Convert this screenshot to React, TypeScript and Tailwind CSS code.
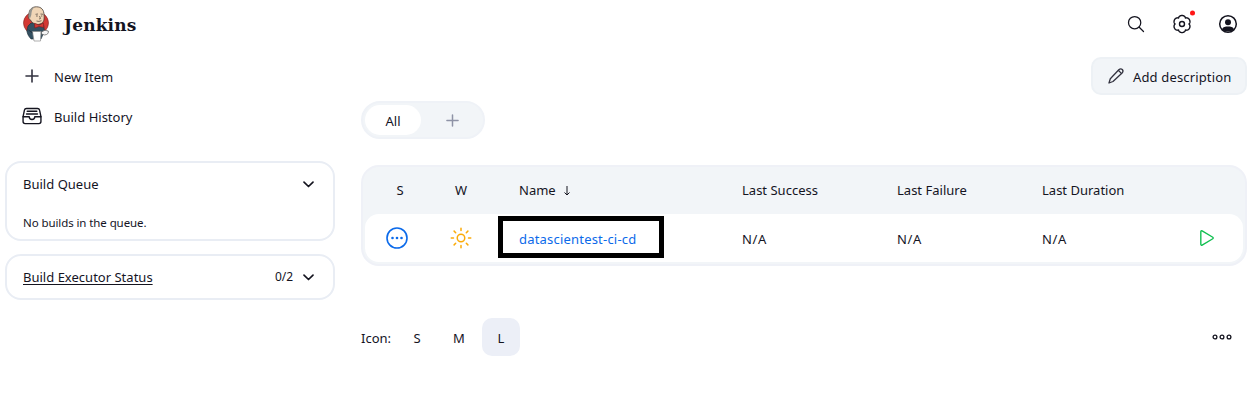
import React from "react";
import {
  IoSearchOutline,
  IoFileTrayFullOutline,
  IoPlayOutline,
  IoSunnyOutline,
} from "react-icons/io5";

function ButlerLogo() {
  return (
    <svg width="26" height="36" viewBox="0 0 26 36" fill="none">
      <ellipse cx="13" cy="17" rx="12.500" ry="11.500" fill="#d33833" stroke="#7a2a26" strokeWidth=".6" />
      <path d="M8 17 L5 20 L3.800 25 C4.500 28 5 29 6 30.500 L8 33 L18 33 L21.500 25 L20.500 19 L16 17Z" fill="#335061" stroke="#1d2b35" strokeWidth=".6" />
      <path d="M6 8 C6 3 9.500 .8 13.500 .8 C18.500 .8 21 4 21 9 C21.500 13 21 17 17 18 C13 19.500 9 17 7.500 14 C5 12.500 5 10 6 8Z" fill="#f0d6b7" stroke="#49403a" strokeWidth=".8" />
      <path d="M6 8 C6 4 8.500 1.500 11.500 1.300 C9 3 8.500 6 8.300 9 L7 12.500 C5.500 11 5.300 9 6 8Z" fill="#94948e" />
      <path d="M12.500 8.300 L15 8 M17.500 8 L20 8.300 M13 10 H14.800 M18 10 H19.300 M16.500 10 L17.500 12.500 L16 13 M13.500 15 Q16 16 18.500 14.700" stroke="#49403a" strokeWidth=".7" />
      <path d="M11.500 17.300 L16 19 L20.500 17 L20.800 21.500 L16 20.500 L11.800 22Z" fill="#d33833" stroke="#761c1c" strokeWidth=".6" />
      <path d="M9.500 25.500 L18 25.500 L17.500 35 L11 35Z" fill="#fff" stroke="#8e8e8e" strokeWidth=".7" />
      <path d="M18.300 26 Q22 23 25.300 25 Q26 28.500 21.500 29 L18.500 28Z" fill="#f5f5f5" stroke="#555" strokeWidth=".7" />
      <path d="M5.500 24 Q7 25 9.500 27" stroke="#1d2b35" strokeWidth=".8" />
    </svg>
  );
}

const gearOutline = Array.from({ length: 96 }, (_, i) => {
  const angle = (i * Math.PI) / 48;
  const radius = 6.9 + 1.7 * Math.pow(Math.abs(Math.sin(3 * angle)), 0.7);
  return `${(10 + radius * Math.cos(angle)).toFixed(2)},${(10 + radius * Math.sin(angle)).toFixed(2)}`;
}).join(" ");

function GearIcon() {
  return (
    <svg width="20" height="20" viewBox="0 0 20 20" fill="none" stroke="#14141f" strokeWidth="1.400" strokeLinejoin="round">
      <polygon points={gearOutline} />
      <circle cx="10" cy="10" r="2.500" />
    </svg>
  );
}

function UserIcon() {
  return (
    <svg width="20" height="20" viewBox="0 0 20 20" fill="none">
      <circle cx="10" cy="10" r="8.300" stroke="#14141f" strokeWidth="1.500" />
      <circle cx="10" cy="8.300" r="3" fill="#14141f" />
      <path d="M4 15.300 C5 12.700 7.500 12.500 10 12.500 C12.500 12.500 15 12.700 16 15.300 C14 18.300 6 18.300 4 15.300Z" fill="#14141f" />
    </svg>
  );
}

function PencilIcon() {
  return (
    <svg width="18" height="18" viewBox="0 0 18 18" fill="none" stroke="#333340" strokeWidth="1.300" strokeLinejoin="round">
      <path d="M11.800 2.800 Q13.700 1 15.300 2.500 Q16.800 4.100 15.100 6 L6 14.500 L2 16 L3.300 11.700Z" />
      <path d="M11.300 3.300 L14.600 6.600" />
    </svg>
  );
}

function ChevronIcon() {
  return (
    <svg width="13" height="13" viewBox="0 0 13 13" fill="none" stroke="#14141f" strokeWidth="1.700" strokeLinecap="round" strokeLinejoin="round">
      <path d="M2 4.200L6.500 8.500L11 4.200" />
    </svg>
  );
}

function PlusIcon({ size, color }: { size: number; color: string }) {
  return (
    <svg width={size} height={size} viewBox="0 0 14 14" fill="none" stroke={color} strokeWidth="1.600" strokeLinecap="round">
      <path d="M7 1V13M1 7H13" />
    </svg>
  );
}

const headings = ["Last Success", "Last Failure", "Last Duration"];
const columns = "grid grid-cols-[56px_66px_248px_155px_145px_1fr] items-center pl-[7px]";

export default function App() {
  return (
    <div className="flex h-[415px] w-[1258px] flex-col overflow-hidden bg-white font-['Noto_Sans','Open_Sans',sans-serif] text-[13px] leading-5 tracking-[0.01px] text-[#14141f]">
      <header className="flex h-12 shrink-0 items-center pr-5 pl-[23px]">
        <ButlerLogo />
        <span className="mt-[2px] ml-[15px] font-['DejaVu_Serif',serif] text-[17px] font-bold tracking-[0.15px]">
          Jenkins
        </span>
        <div className="ml-auto flex items-center gap-[26px]">
          <IoSearchOutline size={20} />
          <div className="relative">
            <GearIcon />
            <span className="absolute -top-[1px] -right-[3px] size-[5px] -translate-y-1/2 rounded-full bg-[#ff1717]" />
          </div>
          <UserIcon />
        </div>
      </header>

      <div className="flex flex-1">
        <aside className="ml-[5px] w-[330px] shrink-0">
          <nav className="flex flex-col pt-[9px] pl-4">
            <a className="flex h-10 items-center gap-[11px]">
              <span className="flex w-[22px] justify-center pb-[2px]">
                <PlusIcon size={14} color="#333340" />
              </span>
              New Item
            </a>
            <a className="flex h-10 items-center gap-[11px]">
              <IoFileTrayFullOutline size={22} className="mb-[2px]" />
              Build History
            </a>
          </nav>
          <section className="mt-6 h-20 rounded-[16px] border-2 border-[#e9edf4] px-4 pt-[11px]">
            <div className="flex items-center justify-between pr-[2px]">
              <span>Build Queue</span>
              <ChevronIcon />
            </div>
            <p className="mt-[19px] text-[11.500px] tracking-[-0.09px]">No builds in the queue.</p>
          </section>
          <section className="mt-[13px] flex h-[46px] items-center rounded-[16px] border-2 border-[#e9edf4] pr-[18px] pl-4">
            <a className="underline underline-offset-[2px]">Build Executor Status</a>
            <span className="mr-[9px] ml-auto text-[12px] tracking-[-0.1px]">0/2</span>
            <ChevronIcon />
          </section>
        </aside>

        <main className="ml-[26px] w-[886px]">
          <div className="flex justify-end pt-[9px]">
            <button className="flex h-[38px] w-[156px] items-center gap-2 rounded-[10px] border-2 border-[#edf1f5] bg-[#f2f5f8] pl-[14px] tracking-[0.15px] whitespace-nowrap">
              <PencilIcon />
              <span className="pt-[2px]">Add description</span>
            </button>
          </div>

          <div className="mt-[6px] flex h-[38px] w-[124px] items-center rounded-full border-2 border-[#eff2f7] bg-[#f2f5f8] p-[2px]">
            <span className="flex h-[30px] w-[56px] items-center justify-center rounded-full bg-white pt-[2px]">All</span>
            <span className="flex flex-1 justify-center pl-[3px]">
              <PlusIcon size={13} color="#8e93a6" />
            </span>
          </div>

          <div className="mt-[26px] h-[101px] rounded-[18px] border-2 border-[#eff1f7] bg-[#f2f5f8] px-[2px] pb-[2px]">
            <div className={`${columns} h-[47px] pb-[2px]`}>
              <span className="text-center">S</span>
              <span className="text-center">W</span>
              <span className="flex pl-[25px]">
                Name
                <svg width="8" height="12" viewBox="0 0 8 12" className="mt-[5px] ml-[7px]" fill="none" stroke="#14141f">
                  <path d="M4 1V10M1.500 7.500L4 10L6.500 7.500" />
                </svg>
              </span>
              {headings.map((heading) => (
                <span key={heading}>{heading}</span>
              ))}
            </div>
            <div className={`${columns} relative h-[48px] rounded-[14px] bg-white`}>
              <span className="flex justify-center pr-[6px]">
                <svg width="22" height="22" viewBox="0 0 22 22" fill="#0b6aea">
                  <circle cx="11" cy="11" r="10" fill="none" stroke="#0b6aea" strokeWidth="1.600" />
                  <circle cx="6.500" cy="11" r="1.300" />
                  <circle cx="11" cy="11" r="1.300" />
                  <circle cx="15.500" cy="11" r="1.300" />
                </svg>
              </span>
              <span className="flex justify-center">
                <IoSunnyOutline size={24} color="#fbab09" stroke="#fbab09" strokeWidth={14} />
              </span>
              <a className="pt-[2px] pl-[25px] tracking-[0.2px] text-[#0b6aea]">datascientest-ci-cd</a>
              <span className="pt-[2px] tracking-[0.6px]">N/A</span>
              <span className="pt-[2px] tracking-[0.6px]">N/A</span>
              <span className="flex items-center justify-between pr-[25px]">
                <span className="pt-[2px] tracking-[0.6px]">N/A</span>
                <IoPlayOutline size={22} color="#10bf50" />
              </span>
              <span className="pointer-events-none absolute top-[2px] left-[133px] h-[42px] w-[166px] border-[5px] border-black" />
            </div>
          </div>

          <div className="mt-[52px] flex h-[38px] items-center">
            <span className="w-[37px] pt-[2px]">Icon:</span>
            <span className="w-[38px] pt-[2px] text-center">S</span>
            <span className="ml-1 w-[38px] pt-[2px] text-center">M</span>
            <span className="ml-1 flex h-[38px] w-[38px] items-center justify-center rounded-[10px] bg-[#eceff7] pt-[2px]">L</span>
            <svg className="mr-[15px] ml-auto" width="20" height="6" viewBox="0 0 20 6" fill="none" stroke="#14141f" strokeWidth="1.300">
              <circle cx="3" cy="3" r="1.900" />
              <circle cx="10" cy="3" r="1.900" />
              <circle cx="17" cy="3" r="1.900" />
            </svg>
          </div>
        </main>
      </div>
    </div>
  );
}
